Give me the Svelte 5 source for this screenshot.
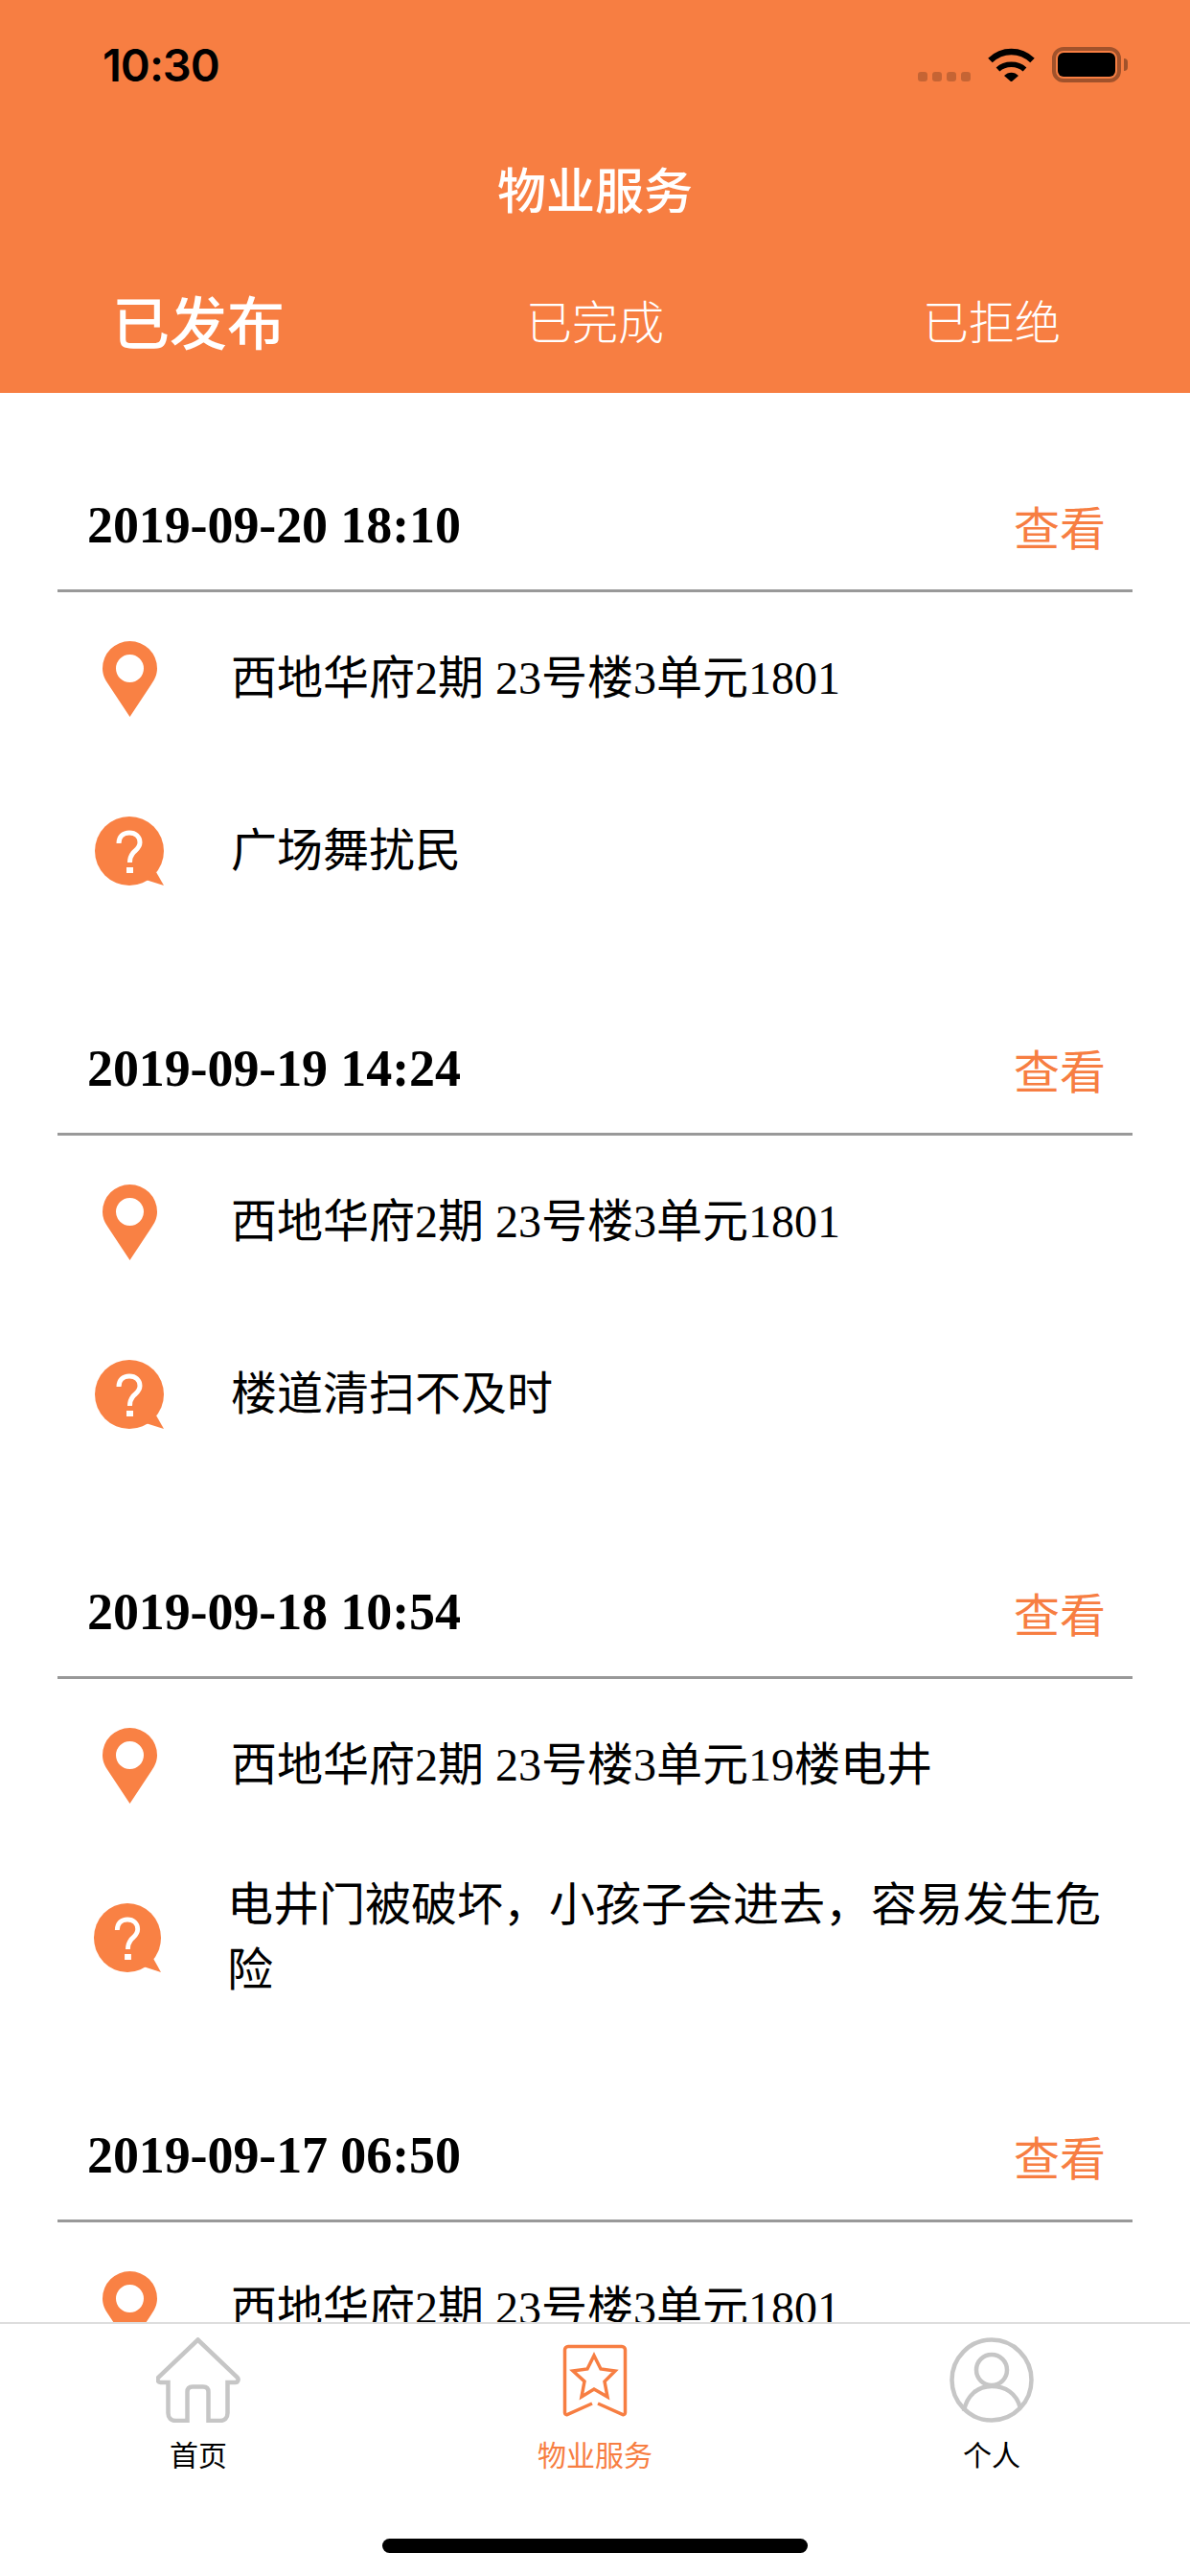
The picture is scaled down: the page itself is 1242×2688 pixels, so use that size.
<script>
	const tabs = [
		{ label: "已发布", active: true },
		{ label: "已完成", active: false },
		{ label: "已拒绝", active: false }
	];

	const address = "西地华府2期 23号楼3单元1801";

	const orders = [
		{ time: "2019-09-20 18:10", address, issue: "广场舞扰民" },
		{ time: "2019-09-19 14:24", address, issue: "楼道清扫不及时" },
		{ time: "2019-09-18 10:54", address: "西地华府2期 23号楼3单元19楼电井", issue: "电井门被破坏，小孩子会进去，容易发生危险", long: true },
		{ time: "2019-09-17 06:50", address, issue: "" }
	];
</script>

<div class="page">
	<header class="head">
		<div class="status">
			<span class="clock">10:30</span>
			<div class="status-icons">
				<div class="signal">
					<i></i><i></i><i></i><i></i>
				</div>
				<svg class="wifi" viewBox="0 0 49 36" aria-hidden="true">
					<path d="M2.5 14C15 2 34 2 46.5 14" fill="none" stroke="#000" stroke-width="6.5" />
					<path d="M10.5 23.5C18 16.5 31 16.5 38.5 23.5" fill="none" stroke="#000" stroke-width="5.5" />
					<path d="M17 30C21 25.5 28 25.5 32 30L24.5 36.5Z" fill="#000" />
				</svg>
				<div class="battery">
					<div class="battery-body"><div class="battery-level"></div></div>
					<div class="battery-cap"></div>
				</div>
			</div>
		</div>
		<h1 class="title">物业服务</h1>
		<nav class="tabs">
			{#each tabs as tab}
				<div class="tab" class:active={tab.active}>{tab.label}</div>
			{/each}
		</nav>
	</header>

	<main class="list">
		{#each orders as order}
			<section class="card">
				<div class="card-head">
					<span class="time">{order.time}</span>
					<span class="view">查看</span>
				</div>
				<div class="row">
					<div class="row-icon">
						<svg class="pin" viewBox="0 0 57 79" aria-hidden="true">
							<path fill-rule="evenodd" d="M28.5 0A28.5 28.5 0 0 1 57 28.5C57 35 54.5 40 51 45L28.5 79L6 45C2.5 40 0 35 0 28.5A28.5 28.5 0 0 1 28.5 0ZM28.5 14A14.5 14.5 0 1 0 28.5 43A14.5 14.5 0 1 0 28.5 14Z" />
						</svg>
					</div>
					<div class="row-text">{order.address}</div>
				</div>
				{#if order.issue}
					<div class="row" class:long={order.long}>
						<div class="row-icon">
							<svg class="ask" viewBox="0 0 72 72" preserveAspectRatio="none" aria-hidden="true">
								<circle cx="36" cy="36" r="36" />
								<path d="M64 58L72 72L53 66Z" />
								<path d="M25 28C25 21 29.5 17 36 17C42.5 17 47 21 47 27C47 33 42.5 35 39.5 38.5C37.5 41 36.5 43 36.5 48" fill="none" stroke="#fff" stroke-width="5" />
								<rect x="33" y="53" width="7" height="6" fill="#fff" />
							</svg>
						</div>
						<div class="row-text">{order.issue}</div>
					</div>
				{/if}
			</section>
		{/each}
	</main>

	<footer class="bar">
		<div class="bar-items">
			<div class="bar-item">
				<svg class="bar-icon" viewBox="0 0 88 89" aria-hidden="true">
					<path class="home" d="M43.5 2.5L84.5 41.5C86.5 43.5 85.5 47 82.5 47H74.5V79C74.5 84 71.5 87 66.5 87H54.5V57C54.5 53.5 52.5 51.5 49 51.5H38C34.5 51.5 32.5 53.5 32.5 57V87H20.5C15.5 87 12.5 84 12.5 79V47H4.5C1.5 47 0.5 43.5 2.5 41.5Z" />
				</svg>
				<span>首页</span>
			</div>
			<div class="bar-item on">
				<svg class="bar-icon" viewBox="0 0 88 89" aria-hidden="true">
					<g class="mark" transform="translate(11 8)">
						<path d="M30 61L4 72.5C2.5 73 1.5 72 1.5 70.5V5C1.5 3 3 1.5 5 1.5H61C63 1.5 64.5 3 64.5 5V70.5C64.5 72 63.5 73 62 72.5L36 61" />
						<path d="M32 11L39 25L54 27L43 38L46 54L32 46L19 54L22 38L10 27L25 25Z" />
					</g>
				</svg>
				<span>物业服务</span>
			</div>
			<div class="bar-item">
				<svg class="bar-icon" viewBox="0 0 88 89" aria-hidden="true">
					<g class="me">
						<ellipse cx="44" cy="44.5" rx="41.5" ry="42" />
						<circle cx="44" cy="34" r="16" />
						<path d="M15 77C18 60 30 51 44 51C58 51 70 58 74 74" />
					</g>
				</svg>
				<span>个人</span>
			</div>
		</div>
		<div class="home-bar"></div>
	</footer>
</div>

<style>
	:global(body) {
		margin: 0;
		background: #fff;
	}

	.page {
		display: flex;
		flex-direction: column;
		width: 1242px;
		height: 2688px;
		overflow: hidden;
		font-family: "Liberation Serif", "Noto Sans CJK SC", serif;
		color: #000;
	}

	/* orange header */
	.head {
		flex: none;
		height: 410px;
		background: #f77e42;
		color: #fff;
		font-family: "Noto Sans CJK SC", sans-serif;
	}

	.status {
		display: flex;
		justify-content: space-between;
		align-items: flex-start;
		box-sizing: border-box;
		height: 130px;
		padding: 49px 65px 0 107px;
	}

	.clock {
		font-family: "Inter", sans-serif;
		font-size: 47px;
		font-weight: 600;
		line-height: 38px;
		letter-spacing: -1px;
		color: #000;
	}

	.status-icons {
		display: flex;
		align-items: flex-start;
		gap: 18px;
	}

	.signal {
		display: flex;
		gap: 5px;
		margin-top: 26px;
	}

	.signal i {
		width: 10px;
		height: 10px;
		border-radius: 3px;
		background: rgba(0, 0, 0, 0.2);
	}

	.wifi {
		display: block;
		width: 49px;
		height: 36px;
	}

	.battery {
		display: flex;
		align-items: center;
		gap: 3px;
	}

	.battery-body {
		box-sizing: border-box;
		width: 72px;
		height: 37px;
		padding: 2px;
		border: 4px solid rgba(0, 0, 0, 0.35);
		border-radius: 12px;
	}

	.battery-level {
		height: 100%;
		border-radius: 6px;
		background: #000;
	}

	.battery-cap {
		width: 4px;
		height: 13px;
		border-radius: 0 4px 4px 0;
		background: rgba(0, 0, 0, 0.35);
	}

	.title {
		display: flex;
		justify-content: center;
		align-items: center;
		height: 132px;
		margin: 0;
		font-size: 51px;
		font-weight: 500;
	}

	.tabs {
		display: grid;
		grid-template-columns: repeat(3, 1fr);
		height: 142px;
	}

	.tab {
		display: flex;
		justify-content: center;
		align-items: center;
		font-size: 48px;
		font-weight: 300;
	}

	.tab.active {
		font-size: 60px;
		font-weight: 500;
	}

	/* order list */
	.list {
		flex: 1;
		min-height: 0;
		overflow: hidden;
		padding: 71px 60px 0;
	}

	.card {
		margin-bottom: 70px;
	}

	.card-head {
		display: flex;
		justify-content: space-between;
		align-items: center;
		height: 134px;
		padding: 0 28px 0 31px;
		border-bottom: 3px solid #999;
	}

	.time {
		font-size: 54px;
		font-weight: 700;
		letter-spacing: -0.1px;
	}

	.view {
		font-size: 48px;
		color: #f77e42;
	}

	.row {
		display: flex;
		align-items: center;
		height: 180px;
	}

	.row-icon {
		display: flex;
		flex: none;
		justify-content: center;
		width: 150px;
		margin-right: 31px;
	}

	.row.long .row-icon {
		margin-right: 27px;
	}

	.row-text {
		font-size: 48px;
		line-height: 68px;
	}

	.row.long .row-text {
		width: 930px;
	}

	.pin {
		display: block;
		width: 57px;
		height: 79px;
		fill: #f98144;
	}

	.ask {
		display: block;
		width: 72px;
		height: 72px;
		fill: #f98144;
	}

	.row.long .ask {
		width: 70px;
		margin-right: 4px;
	}

	/* bottom bar */
	.bar {
		position: relative;
		z-index: 1;
		flex: none;
		box-sizing: border-box;
		height: 265px;
		border-top: 2px solid #ddd;
		background: #fff;
	}

	.bar-items {
		display: grid;
		grid-template-columns: repeat(3, 1fr);
		padding-top: 14px;
	}

	.bar-item {
		display: flex;
		flex-direction: column;
		align-items: center;
		font-family: "Noto Sans CJK SC", sans-serif;
		font-size: 30px;
		line-height: 40px;
	}

	.bar-item.on {
		color: #f77e42;
	}

	.bar-icon {
		display: block;
		width: 88px;
		height: 89px;
		margin-bottom: 12px;
	}

	.home,
	.me {
		fill: none;
		stroke: #c6c6c6;
		stroke-width: 4.5;
	}

	.mark {
		fill: none;
		stroke: #f77e42;
		stroke-width: 3.5;
	}

	.home-bar {
		position: absolute;
		left: 399px;
		top: 224px;
		width: 444px;
		height: 15px;
		border-radius: 8px;
		background: #000;
	}
</style>
